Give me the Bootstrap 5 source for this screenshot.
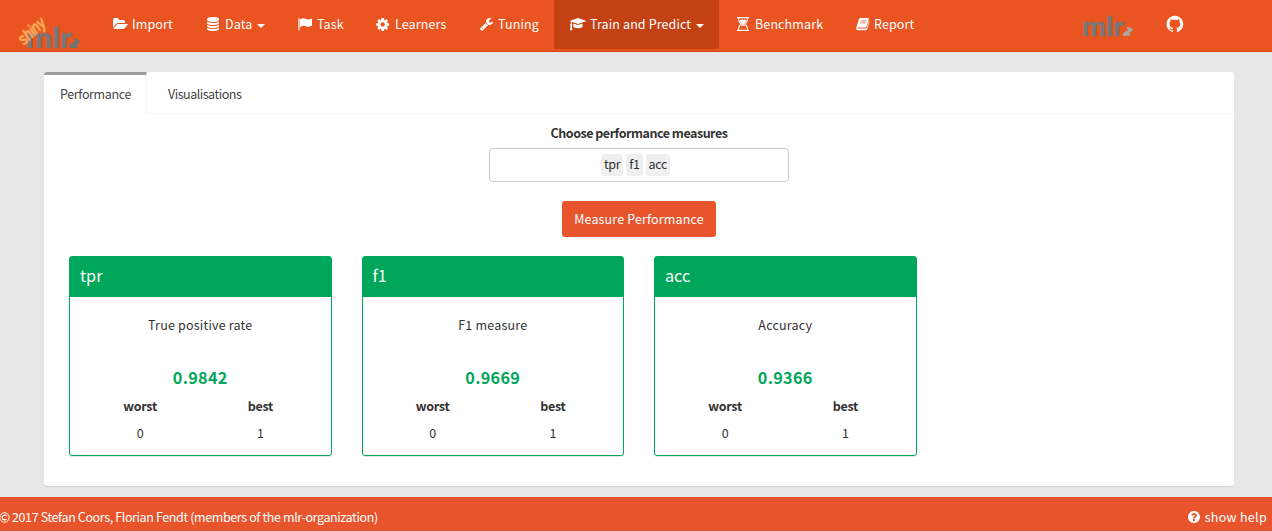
<!DOCTYPE html>
<html lang="en">
<head>
<meta charset="utf-8">
<title>shinyMlr</title>
<link href="https://cdn.jsdelivr.net/npm/bootstrap@5.3.0/dist/css/bootstrap.min.css" rel="stylesheet">
<style>
body{font-family:"Noto Sans CJK SC",sans-serif;font-size:12.5px;line-height:20px;color:#333;background:#e7e7e7;height:531px;overflow:hidden}
svg{display:block;fill:currentColor;overflow:visible}
.top-nav{height:52px;background:#e95420;border-bottom:1px solid #d34413;color:#fff;padding:0}
.brand-box{width:98px;height:51px}
.nav-entry{height:49px;padding:0 0 2px 15px;color:#fff;margin-right:3px;font-size:12.5px;letter-spacing:.12px;line-height:46px;white-space:nowrap}
.nav-entry:hover{color:#fff}
.nav-entry.current{background:#c34113}
.icon-slot{width:19px;flex:none;padding-top:1px}
.caret-down{border:4px solid transparent;border-top-color:#fff;border-bottom:0;margin:4px 0 0 5px}
.panel-box{margin:20px 38px 0 44px;height:414px;background:#fff;border-radius:3px;box-shadow:0 1px 1px rgba(0,0,0,.1)}
.tab-row{height:42px;border-bottom:1px solid #f4f4f4}
.tab-item{height:42px;padding:3px 17px 0;line-height:37px;color:#444;letter-spacing:-.48px}
.tab-item.current{width:103px;border-top:3px solid #9e9e9e;padding:0 0 0 16px;border-right:1px solid #f4f4f4;background:#fff;border-radius:3px 0 0 0;letter-spacing:-.35px}
.pick-label{font-weight:700;margin-top:9px;letter-spacing:-.48px}
.pick-box{width:300px;height:34px;border:1px solid #ccc;border-radius:4px;margin-top:5px;gap:3px;padding-right:7px}
.pick-box span{background:#efefef;border-radius:3px;padding:0 3px;height:22px;line-height:19px;color:#333;letter-spacing:-.35px}
.go-btn{width:154px;height:36px;background:#e8552d;color:#fff;border:0;border-radius:3px;font-size:12.5px;letter-spacing:.15px;padding:0;margin-top:19px;line-height:36px}
.score-row{margin:19px 0 0 25px;gap:30px}
.score-card{width:262.500px;height:200px;border:1px solid #00a65a;border-radius:3px;box-shadow:0 1px 1px rgba(0,0,0,.1)}
.score-head{height:40px;background:#00a65a;color:#fff;font-size:16.2px;padding-left:10px;line-height:36px}
.score-name{margin-top:18px;letter-spacing:.2px}
.score-value{font-size:16.2px;font-weight:700;color:#00a65a;margin-top:32px;letter-spacing:.3px}
.score-ends{padding:0 10px;margin-top:9px}
.score-ends b{letter-spacing:-.3px}
.score-ends span{padding-top:7px}
.foot-bar{margin-top:11px;height:34px;background:#e8552d;color:#fff;font-size:12.5px;letter-spacing:-.38px;padding-top:10px}
.help-link{letter-spacing:.3px;padding:0 5px 4px 0}
.neon{text-shadow:0 0 2px #ffa04a}
</style>
</head>
<body>
<nav class="top-nav d-flex">
  <div class="brand-box">
    <svg width="98" height="51"><text x="26" y="48" font-family="Lato" font-weight="700" font-size="28" fill="#78777a" stroke="#78777a" stroke-width=".5" textLength="46" lengthAdjust="spacingAndGlyphs">mlr</text>
    <path fill="#6c7478" d="M73 37.500l3 1.800 1.500-.6.500 1.500 2 1-.8 1.800-2 .7-.7 1.300 1 1.500v1.500h-7.500v-1.800l-.8-.4.800-1 2-2 3-.8-.5-2z"/>
    <text class="neon" transform="translate(24 45.500) rotate(-42)" font-family="Liberation Sans Narrow,Liberation Sans" font-style="italic" font-size="17" font-weight="400" fill="#ffb768" stroke="#fbb063" stroke-width=".3" textLength="31" lengthAdjust="spacingAndGlyphs">shiny</text></svg>
  </div>
  <a class="nav-entry d-flex align-items-center text-decoration-none" style="width:91px"><span class="icon-slot"><svg width="15" height="14" viewBox="0 0 1920 1792"><path d="M1879 952q0 31-31 66l-336 396q-43 51-120.500 86.500t-143.500 35.500h-1088q-34 0-60.500-13t-26.500-43q0-31 31-66l336-396q43-51 120.500-86.500t143.500-35.500h1088q34 0 60.500 13t26.500 43zm-343-344v160h-832q-94 0-197 47.500t-164 119.500l-337 396-5 6q0-4-.5-12.500t-.5-12.500v-960q0-92 66-158t158-66h320q92 0 158 66t66 158v32h544q92 0 158 66t66 158z"/></svg></span>Import</a>
  <a class="nav-entry d-flex align-items-center text-decoration-none" style="width:88px"><span class="icon-slot" style="width:18px"><svg width="14" height="14" viewBox="128 0 1792 1792"><path d="M896 768q237 0 443-43t325-127v170q0 69-103 128t-280 93.500-385 34.500-385-34.500-280-93.500-103-128v-170q119 84 325 127t443 43zm0 768q237 0 443-43t325-127v170q0 69-103 128t-280 93.500-385 34.500-385-34.500-280-93.500-103-128v-170q119 84 325 127t443 43zm0-384q237 0 443-43t325-127v170q0 69-103 128t-280 93.500-385 34.500-385-34.500-280-93.500-103-128v-170q119 84 325 127t443 43zm0-1152q208 0 385 34.500t280 93.500 103 128v128q0 69-103 128t-280 93.500-385 34.500-385-34.500-280-93.500-103-128v-128q0-69 103-128t280-93.500 385-34.500z"/></svg></span>Data<i class="caret-down"></i></a>
  <a class="nav-entry d-flex align-items-center text-decoration-none" style="width:75px"><span class="icon-slot"><svg width="15" height="14" viewBox="0 0 15 14"><path d="M.3 1.2h1.3v12H.3z"/><path d="M2 2.5C5 .7 6.500 1.300 8 2.100c2 1 4 .3 6-.7v7.200c-2 1.200-4 1.700-6 .7C6.200 8.300 4.500 8.500 2 9.900z"/></svg></span>Task</a>
  <a class="nav-entry d-flex align-items-center text-decoration-none" style="width:101px"><span class="icon-slot"><svg width="15" height="15" viewBox="100 0 1792 1792"><path d="M1152 896q0-106-75-181t-181-75-181 75-75 181 75 181 181 75 181-75 75-181zm512-109v222q0 12-8 23t-20 13l-185 28q-19 54-39 91 35 50 107 138 10 12 10 25t-9 23q-27 37-99 108t-94 71q-12 0-26-9l-138-108q-44 23-91 38-16 136-29 186-7 28-36 28h-222q-14 0-24.500-8.500t-11.500-21.500l-28-184q-49-16-90-37l-141 107q-10 9-25 9-14 0-25-11-126-114-165-168-7-10-7-23 0-12 8-23 15-21 51-66.500t54-70.500q-27-50-41-99l-183-27q-13-2-21-12.500t-8-23.500v-222q0-12 8-23t19-13l186-28q14-46 39-92-40-57-107-138-10-12-10-24 0-10 9-23 26-36 98.500-107.500t94.500-71.500q13 0 26 10l138 107q44-23 91-38 16-136 29-186 7-28 36-28h222q14 0 24.500 8.500t11.500 21.500l28 184q49 16 90 37l142-107q9-9 24-9 13 0 25 10 129 119 165 170 7 8 7 22 0 12-8 23-15 21-51 66.500t-54 70.500q26 50 41 98l183 28q13 2 21 12.500t8 23.500z"/></svg></span>Learners</a>
  <a class="nav-entry d-flex align-items-center text-decoration-none" style="width:86px"><span class="icon-slot" style="width:18px"><svg width="14" height="14" viewBox="64 0 1792 1792"><path d="M448 1472q0-26-19-45t-45-19-45 19-19 45 19 45 45 19 45-19 19-45zm644-420l-682 682q-37 37-90 37-52 0-91-37l-106-108q-38-36-38-90 0-53 38-91l681-681q39 98 114.500 173.500t173.500 114.500zm634-435q0 39-23 106-47 134-164.500 217.500t-258.500 83.500q-185 0-316.500-131.500t-131.500-316.500 131.500-316.500 316.500-131.500q58 0 121.500 16.500t107.500 46.500q16 11 16 28t-16 28l-293 169v224l193 107q5-3 79-48.500t135.500-81 70.500-35.500q15 0 23.500 10t8.500 25z"/></svg></span>Tuning</a>
  <a class="nav-entry current d-flex align-items-center text-decoration-none" style="width:165px"><span class="icon-slot" style="width:21px"><svg width="18" height="14" viewBox="0 0 18 14"><path d="M9 1l8.500 3L9 7 3.700 5.100C3 5.600 2.800 6.200 2.700 7c.8.500.8 1.400.2 1.900l.6 4.300H1l.6-4.300C1 8.400 1 7.500 1.700 7c0-.9.300-1.700.8-2.200L.5 4z"/><path d="M4.500 6.400L9 8l4.500-1.600.2 3.200c-1 2.200-8.400 2.200-9.400 0z"/></svg></span>Train and Predict<i class="caret-down"></i></a>
  <a class="nav-entry d-flex align-items-center text-decoration-none" style="width:116px"><span class="icon-slot" style="width:18px"><svg width="12" height="14" viewBox="0 0 12 14"><path d="M0 0h12v1.200H0zM0 12.800h12V14H0zM1.100 1h1c0 3 .9 4.600 2.900 6-2 1.400-2.900 3-2.900 6h-1c0-3 .7-4.700 2.400-6C1.800 5.700 1.100 4 1.100 1zM10.900 1h-1c0 3-.9 4.600-2.900 6 2 1.400 2.900 3 2.900 6h1c0-3-.7-4.700-2.400-6 1.700-1.300 2.400-3 2.400-6zM2.700 2.700h6.600C9 4.800 8.200 6 6.600 7 7.300 7.500 8 8.200 8.300 9.200L6 8.400 3.700 9.200C4 8.200 4.700 7.500 5.400 7 3.800 6 3 4.800 2.700 2.700z"/></svg></span>Benchmark</a>
  <a class="nav-entry d-flex align-items-center text-decoration-none" style="width:90px"><span class="icon-slot" style="width:18px"><svg width="14" height="14" viewBox="0 0 14 14"><path fill-rule="evenodd" d="M4.400 1h7.400c.8 0 1.200.5 1 1.300l-2.100 7c-.2.800-.8 1.200-1.600 1.200H2c-.7 0-.8.800 0 .9h7.900c.6 0 .9-.3 1.100-.8L13 4c.4.300.5.700.3 1.200l-2 6.800c-.3.800-1 1.200-1.700 1.200H2C.7 13.200-.2 12 .2 10.700L2.900 2.200C3.100 1.400 3.700 1 4.400 1zM5 3.500l-.3.800h5.400l.3-.8zM4.400 5.500l-.3.800h5.400l.3-.8z"/></svg></span>Report</a>
  <div class="ms-auto d-flex">
    <svg width="84" height="51"><text x="-1" y="35.500" font-family="Lato" font-weight="700" font-size="26" fill="#78777a" stroke="#78777a" stroke-width=".5" textLength="42" lengthAdjust="spacingAndGlyphs">mlr</text><path fill="#aaa6a4" d="M43 26l3.500 1.800 1.500-.3.500 1.200 1.500 1-1 1.500-2 .7-.7 1.100 1 1.200v1.600h-7.500v-1.800l2.500-2.600 2.500-1-.5-2z"/></svg>
    <svg width="105" height="51"><path transform="translate(-1.900 14.400) scale(.0109)" d="M896 128q209 0 385.500 103t279.500 279.500 103 385.500q0 251-146.500 451.500t-378.500 277.500q-27 5-40-7t-13-30q0-3 .5-76.500t.5-134.500q0-97-52-142 57-6 102.500-18t94-39 81-66.500 53-105 20.500-150.500q0-119-79-206 37-91-8-204-28-9-81 11t-92 44l-38 24q-93-26-192-26t-192 26q-16-11-42.500-27t-83.500-38.500-85-13.500q-45 113-8 204-79 87-79 206 0 85 20.500 150t52.500 105 80.500 67 94 39 102.500 18q-39 36-49 103-21 10-45 15t-57 5-65.500-21.500-55.500-62.500q-19-32-48.500-52t-49.500-24l-20-3q-21 0-29 4.500t-5 11.500 9 14 13 12l7 5q22 10 43.500 38t31.500 51l10 23q13 38 44 61.500t67 30 69.500 7 55.500-3.500l23-4q0 38 .5 88.500t.5 54.500q0 18-13 30t-40 7q-232-77-378.500-277.500t-146.500-451.500q0-209 103-385.500t279.500-279.500 385.500-103z"/></svg>
  </div>
</nav>
<main class="panel-box">
  <div class="tab-row d-flex"><div class="tab-item current">Performance</div><div class="tab-item ms-1">Visualisations</div></div>
  <div class="d-flex flex-column align-items-center">
    <div class="pick-label">Choose performance measures</div>
    <div class="pick-box d-flex align-items-center justify-content-center"><span>tpr</span><span>f1</span><span>acc</span></div>
    <button class="btn go-btn">Measure Performance</button>
  </div>
  <div class="score-row d-flex">
    <section class="score-card text-center"><div class="score-head text-start">tpr</div><div class="score-name">True positive rate</div><div class="score-value">0.9842</div><div class="score-ends row g-0"><b class="col-6">worst</b><b class="col-6">best</b><span class="col-6">0</span><span class="col-6">1</span></div></section>
    <section class="score-card text-center"><div class="score-head text-start">f1</div><div class="score-name">F1 measure</div><div class="score-value">0.9669</div><div class="score-ends row g-0"><b class="col-6">worst</b><b class="col-6">best</b><span class="col-6">0</span><span class="col-6">1</span></div></section>
    <section class="score-card text-center"><div class="score-head text-start">acc</div><div class="score-name">Accuracy</div><div class="score-value">0.9366</div><div class="score-ends row g-0"><b class="col-6">worst</b><b class="col-6">best</b><span class="col-6">0</span><span class="col-6">1</span></div></section>
  </div>
</main>
<footer class="foot-bar d-flex justify-content-between">
  <div class="d-flex"><svg width="12" height="20" viewBox="0 0 12 20"><g fill="none" stroke="#fff"><circle cx="4.500" cy="10.500" r="4.700"/><path d="M6.500 9a2.400 2.400 0 1 0 0 3" stroke-width="1.200"/></g></svg>2017 Stefan Coors, Florian Fendt (members of the mlr-organization)</div>
  <div class="help-link d-flex align-items-center"><svg class="me-1" width="14" height="14" viewBox="0 0 1792 1792"><path d="M1024 1376v-192q0-14-9-23t-23-9h-192q-14 0-23 9t-9 23v192q0 14 9 23t23 9h192q14 0 23-9t9-23zm256-672q0-88-55.500-163t-138.500-116-170-41q-243 0-371 213-15 24 8 42l132 100q7 6 19 6 16 0 25-12 53-68 86-92 34-24 86-24 48 0 85.500 26t37.500 59q0 38-20 61t-68 45q-63 28-115.500 86.500t-52.500 125.500v36q0 14 9 23t23 9h192q14 0 23-9t9-23q0-19 21.500-49.500t54.500-49.500q32-18 49-28.500t46-35 44.500-48 28-60.500 12.500-81zm384 192q0 209-103 385.500t-279.500 279.500-385.500 103-385.500-103-279.500-279.500-103-385.500 103-385.500 279.500-279.500 385.500-103 385.500 103 279.500 279.500 103 385.500z"/></svg>show help</div>
</footer>
<script src="https://cdn.jsdelivr.net/npm/bootstrap@5.3.0/dist/js/bootstrap.bundle.min.js"></script>
</body>
</html>
